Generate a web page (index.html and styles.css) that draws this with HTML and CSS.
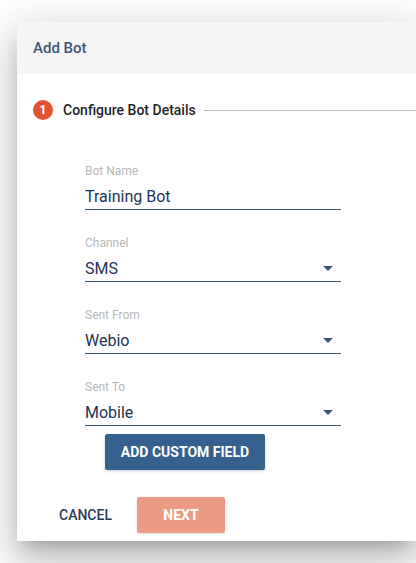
FILE: index.html
```html
<!DOCTYPE html>
<html>
<head>
<meta charset="utf-8">
<link rel="stylesheet" href="styles.css">
</head>
<body>
<div class="dialog">
  <div class="header">Add Bot</div>
  <div class="step">
    <span class="circle">1</span>
    <span class="step-title">Configure Bot Details</span>
    <span class="step-line"></span>
  </div>
  <div class="fields">
    <div class="field">
      <div class="label">Bot Name</div>
      <div class="value">Training Bot</div>
    </div>
    <div class="field">
      <div class="label">Channel</div>
      <div class="value select">SMS<span class="arrow"></span></div>
    </div>
    <div class="field">
      <div class="label">Sent From</div>
      <div class="value select">Webio<span class="arrow"></span></div>
    </div>
    <div class="field">
      <div class="label">Sent To</div>
      <div class="value select">Mobile<span class="arrow"></span></div>
    </div>
    <button class="btn-custom">ADD CUSTOM FIELD</button>
  </div>
  <div class="footer">
    <button class="btn-cancel">CANCEL</button>
    <button class="btn-next">NEXT</button>
  </div>
</div>
</body>
</html>
```

FILE: styles.css
```css
html, body {
  margin: 0;
  padding: 0;
  background: #ffffff;
  overflow: hidden;
  height: 563px;
}
body {
  font-family: Roboto, "Liberation Sans", Arial, sans-serif;
  padding-top: 22px;
  padding-left: 17px;
  box-sizing: border-box;
}
.dialog {
  width: 399px;
  background: #ffffff;
  box-shadow: 0 11px 15px -7px rgba(0,0,0,0.22), 0 24px 38px 3px rgba(0,0,0,0.14), 0 9px 46px 8px rgba(0,0,0,0.12);
  padding-bottom: 8px;
}
.header {
  height: 52px;
  background: #f5f5f5;
  display: flex;
  align-items: center;
  padding-left: 16px;
  font-size: 15px;
  font-weight: 500;
  color: #3b5477;
}
.step {
  display: flex;
  align-items: center;
  padding: 26px 0 0 16px;
  height: 20px;
}
.circle {
  width: 20px;
  height: 20px;
  border-radius: 50%;
  background: #e05433;
  color: #fff;
  font-size: 12px;
  font-weight: 700;
  display: flex;
  align-items: center;
  justify-content: center;
  flex: none;
}
.step-title {
  margin-left: 10px;
  font-size: 14px;
  font-weight: 500;
  color: #1f1f1f;
  white-space: nowrap;
}
.step-line {
  flex: 1;
  height: 1px;
  background: #bdbdbd;
  margin-left: 8px;
}
.fields {
  padding: 44px 0 0 68px;
  display: flex;
  flex-direction: column;
}
.field {
  width: 256px;
  margin-bottom: 26px;
}
.field:nth-child(4) {
  margin-bottom: 8px;
}
.label {
  font-size: 12px;
  line-height: 14px;
  color: #b7b7b7;
}
.value {
  margin-top: 8px;
  font-size: 16px;
  line-height: 21px;
  color: #1d3353;
  padding-bottom: 2px;
  border-bottom: 1px solid #3a5478;
  display: flex;
  align-items: center;
  justify-content: space-between;
}
.arrow {
  width: 0;
  height: 0;
  border-left: 5px solid transparent;
  border-right: 5px solid transparent;
  border-top: 5px solid #3a5478;
  margin-right: 8px;
}
.btn-custom {
  align-self: flex-start;
  margin-left: 20px;
  width: 160px;
  height: 36px;
  border: none;
  border-radius: 2px;
  background: #36618e;
  color: #ffffff;
  font-family: inherit;
  font-size: 14px;
  font-weight: 700;
  box-shadow: 0 1px 3px rgba(0,0,0,0.2);
  padding: 0;
}
.footer {
  display: flex;
  align-items: center;
  padding: 27px 0 0 26px;
  gap: 9px;
}
.btn-cancel {
  background: none;
  border: none;
  padding: 0 16px;
  height: 36px;
  font-family: inherit;
  font-size: 14px;
  font-weight: 500;
  color: #2c3b57;
}
.btn-next {
  width: 88px;
  height: 36px;
  border: none;
  border-radius: 2px;
  background: #ec9a85;
  color: #ffffff;
  font-family: inherit;
  font-size: 14px;
  font-weight: 700;
  padding: 0;
  box-shadow: 0 1px 3px rgba(0,0,0,0.15);
}
```
